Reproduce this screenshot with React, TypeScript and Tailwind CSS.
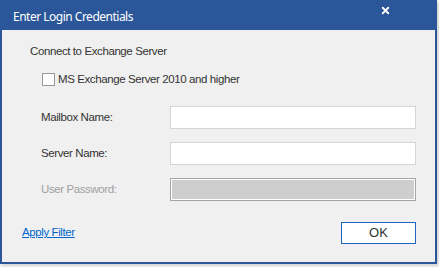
import { X } from 'lucide-react';

export default function App() {
  return (
    <div className="w-[439px] h-[267px] bg-[#f7f7f7]" style={{ fontFamily: '"Liberation Sans", Arial, sans-serif' }}>
      <div className="w-[437px] h-[264px] flex flex-col border-x-2 border-b-2 border-[#2b579a] bg-[#f0f0f0] shadow-[2px_2px_3px_rgba(0,0,0,0.15)]">
        {/* Title bar */}
        <div className="h-[30px] -mx-[2px] bg-[#2b579a] flex items-center justify-between pl-[13px] pr-[46px] text-white">
          <span className="text-[12px] tracking-[-0.5px] mt-[3px]" style={{ fontFamily: '"Noto Sans", "Open Sans", sans-serif' }}>
            Enter Login Credentials
          </span>
          <X className="w-[11px] h-[11px] -mt-[9px]" strokeWidth={4} />
        </div>

        {/* Body */}
        <div className="flex-1 flex flex-col text-[11.5px] tracking-[-0.4px] text-[#333]">
          <div className="pl-[28px] pt-[13px] h-[42px]">Connect to Exchange Server</div>

          <label className="flex items-center gap-[3px] pl-[40px] h-[15px]">
            <span className="w-[13px] h-[13px] border border-[#999] bg-white" />
            <span>MS Exchange Server 2010 and higher</span>
          </label>

          <div className="flex items-center justify-between pl-[39px] pr-[19px] mt-[19px]">
            <span>Mailbox Name:</span>
            <div className="w-[246px] h-[23px] border border-[#d5d5d5] bg-white" />
          </div>
          <div className="flex items-center justify-between pl-[39px] pr-[19px] mt-[13px]">
            <span>Server Name:</span>
            <div className="w-[246px] h-[23px] border border-[#d5d5d5] bg-white" />
          </div>
          <div className="flex items-center justify-between pl-[39px] pr-[19px] mt-[13px]">
            <span className="text-[#a0a0a0]">User Password:</span>
            <div className="w-[246px] h-[23px] border border-[#a5a5a5] bg-white p-px">
              <div className="w-full h-full bg-[#cecece]" />
            </div>
          </div>

          <div className="flex items-center justify-between pl-[20px] pr-[19px] mt-[21px]">
            <a href="#" className="text-[#0066cc] underline">Apply Filter</a>
            <button className="w-[75px] h-[22px] border-[1.5px] border-[#1e63c4] bg-white text-[#333] text-[13px] tracking-normal">OK</button>
          </div>
        </div>
      </div>
    </div>
  );
}
